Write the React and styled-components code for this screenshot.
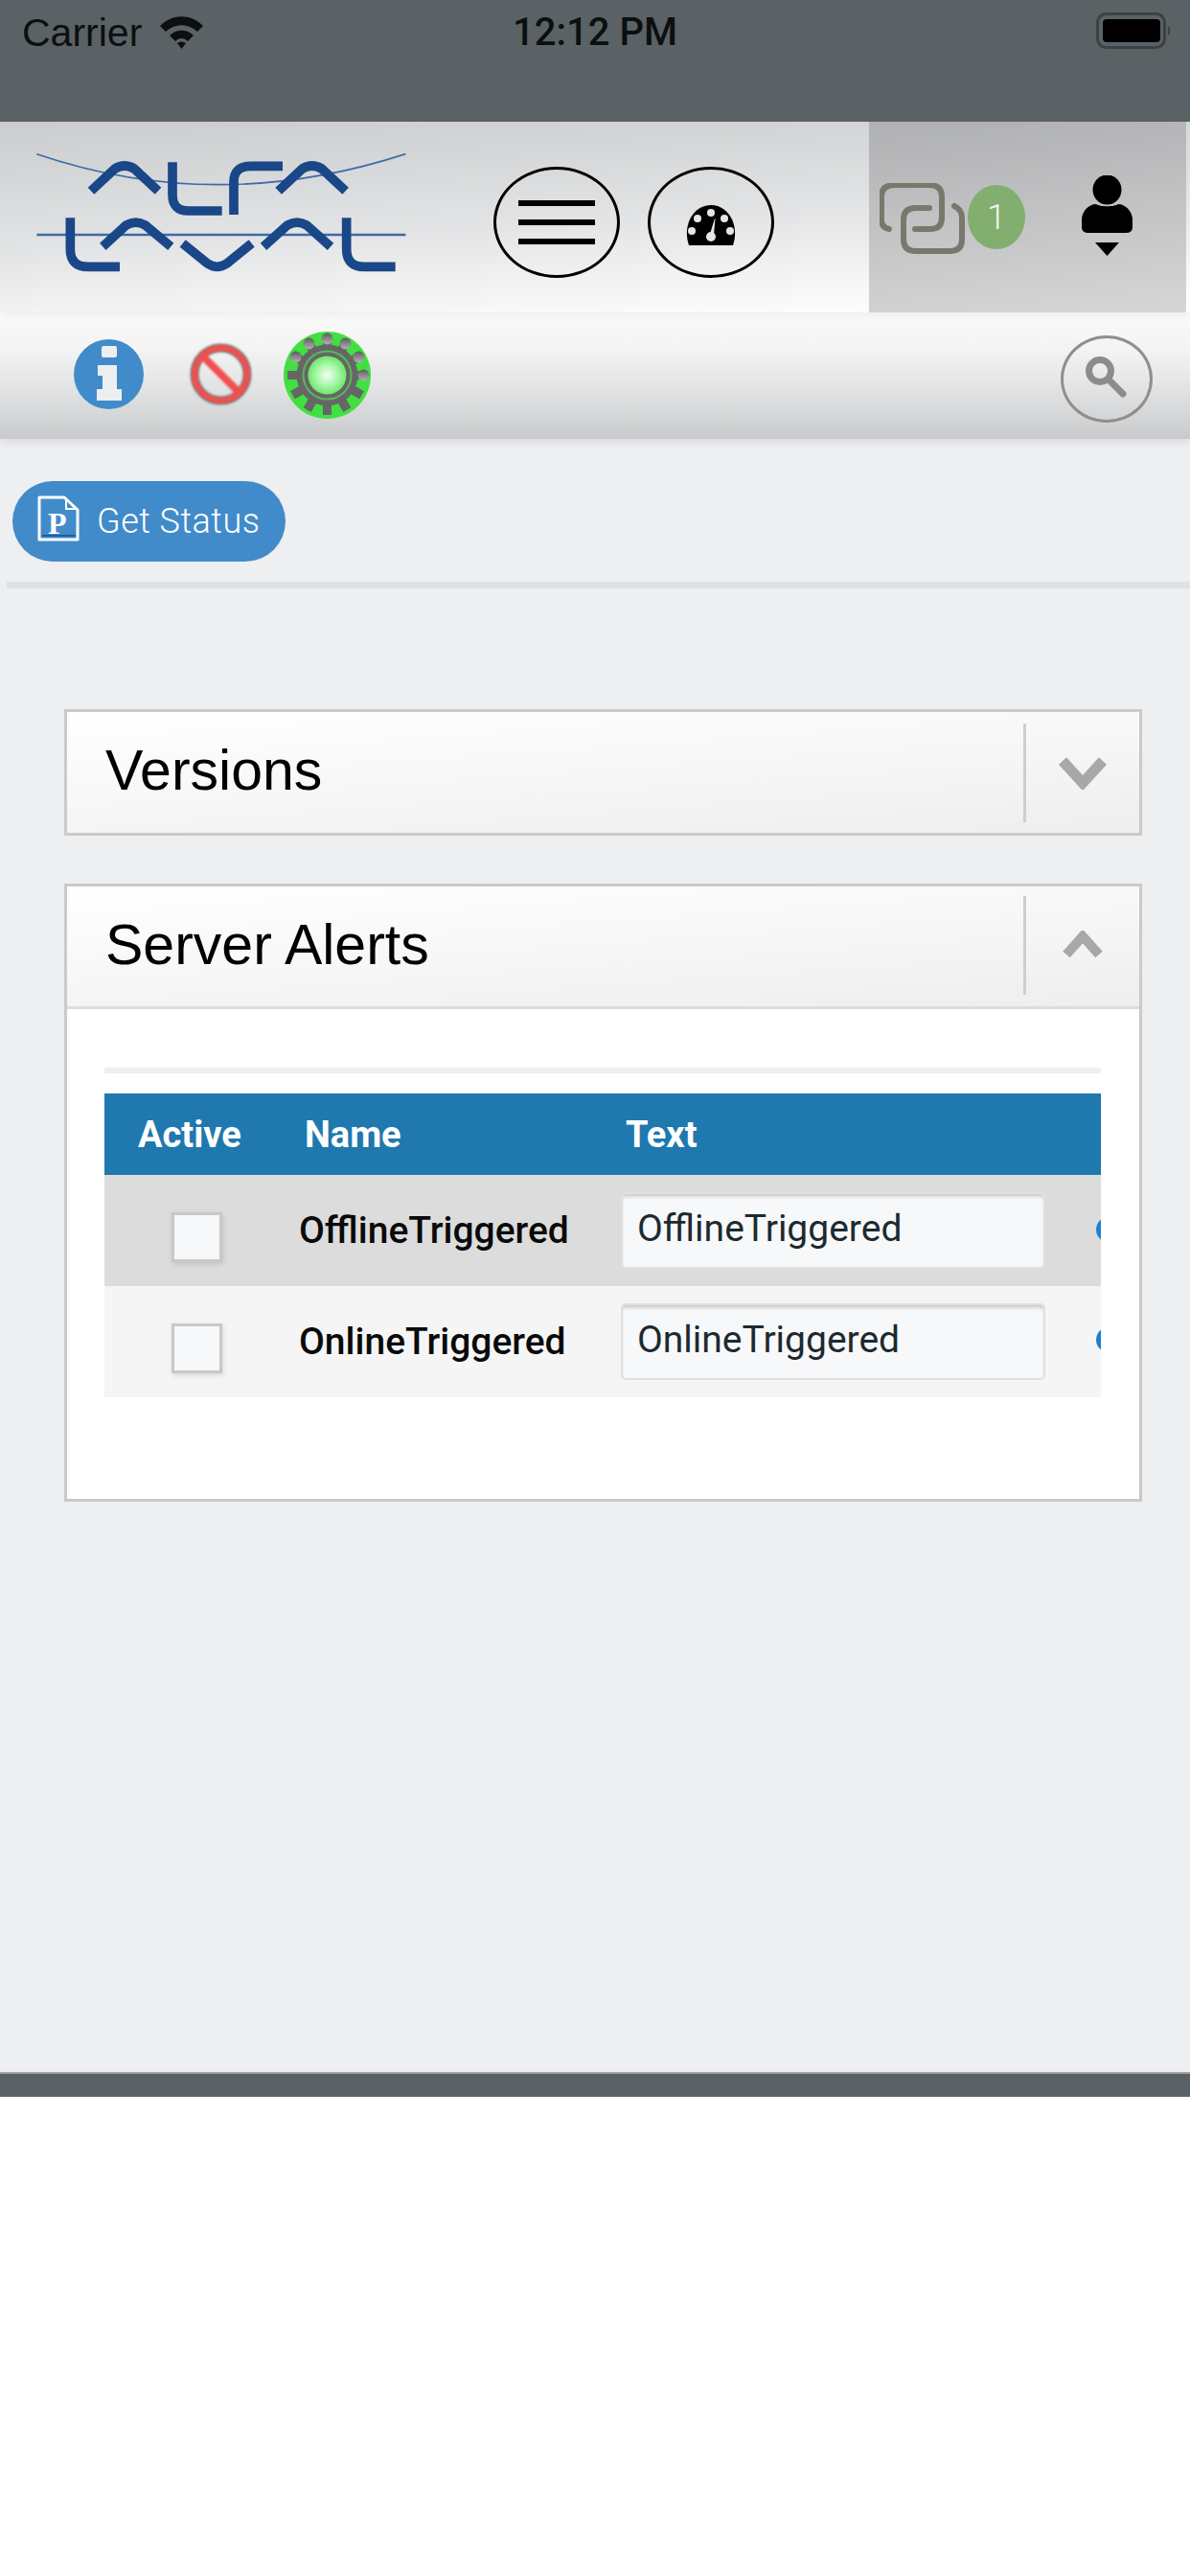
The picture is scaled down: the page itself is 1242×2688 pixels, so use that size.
import React from 'react';
import styled, { createGlobalStyle } from 'styled-components';

const Global = createGlobalStyle`
  html, body { margin: 0; padding: 0; background: #fff; }
  * { box-sizing: border-box; }
`;

const Page = styled.div`
  width: 1242px;
  height: 2688px;
  display: flex;
  flex-direction: column;
  background: #fff;
  font-family: "Liberation Sans", Arial, sans-serif;
  overflow: hidden;
`;

const StatusBar = styled.div`
  height: 127px;
  flex: none;
  background: #5b6265;
  display: flex;
  align-items: flex-start;
  padding: 14px 19px 0 23px;
  color: #0c0f10;
  position: relative;
`;

const Carrier = styled.span`
  font-size: 41px;
  line-height: 40px;
`;

const Clock = styled.span`
  position: absolute;
  left: 0;
  right: 0;
  top: 14px;
  text-align: center;
  font-family: Roboto, sans-serif;
  font-weight: 500;
  font-size: 40px;
  line-height: 40px;
`;

const Wifi = styled.svg`
  width: 49px;
  height: 36px;
  margin: 1px 0 0 17px;
`;

const Battery = styled.svg`
  width: 79px;
  height: 38px;
  margin: -1px 0 0 auto;
`;

const TopBar = styled.header`
  height: 199px;
  flex: none;
  display: flex;
  padding-right: 4px;
  background: linear-gradient(177deg, #cbccce 0%, #e2e3e4 50%, #ffffff 97%);
  position: relative;
  z-index: 2;
  box-shadow: 0 3px 10px rgba(0, 0, 0, 0.06);
`;

const Logo = styled.svg`
  width: 420px;
  height: 160px;
  margin: 13px 0 0 20px;
  flex: none;
`;

const RoundButtons = styled.div`
  display: flex;
  gap: 29px;
  margin: 47px 0 0 75px;
`;

const RoundButton = styled.div`
  width: 132px;
  height: 116px;
  border: 3px solid #000;
  border-radius: 50%;
  display: flex;
  flex-direction: column;
  align-items: center;
  justify-content: center;
  gap: 14px;
`;

const Bar = styled.span`
  width: 80px;
  height: 6px;
  background: #000;
`;

const Gauge = styled.svg`
  width: 54px;
  height: 42px;
  margin-top: 6px;
`;

const UserPanel = styled.div`
  margin-left: auto;
  width: 331px;
  background: linear-gradient(175deg, #afb0b2 0%, #d6d6d6 100%);
  display: flex;
  padding: 64px 0 0 11px;
`;

const ChatIcon = styled.svg`
  width: 90px;
  height: 74px;
  flex: none;
`;

const Badge = styled.span`
  width: 60px;
  height: 67px;
  margin: 2px 0 0 2px;
  border-radius: 50%;
  background: #82ae6f;
  color: #f2f6ef;
  font-family: Roboto, sans-serif;
  font-weight: 300;
  font-size: 36px;
  display: flex;
  align-items: center;
  justify-content: center;
  flex: none;
`;

const UserIcon = styled.svg`
  width: 55px;
  height: 85px;
  margin: -8px 0 0 58px;
  flex: none;
`;

const SubBar = styled.div`
  height: 132px;
  flex: none;
  display: flex;
  align-items: center;
  padding: 0 39px 0 77px;
  background: linear-gradient(180deg, #fbfbfb 0%, #f3f3f4 30%, #dfe0e1 65%, #c9cacc 100%);
  box-shadow: 0 3px 10px rgba(0, 0, 0, 0.1);
  position: relative;
  z-index: 1;
`;

const InfoIcon = styled.svg`
  width: 73px;
  height: 73px;
  margin-top: -4px;
  flex: none;
`;

const NoIcon = styled.svg`
  width: 65px;
  height: 65px;
  margin: -4px 33px 0 48px;
  flex: none;
  filter: blur(0.8px);
`;

const GearIcon = styled.svg`
  width: 91px;
  height: 91px;
  margin-top: -2px;
  flex: none;
`;

const SearchButton = styled.div`
  margin: 6px 0 0 auto;
  width: 96px;
  height: 91px;
  border: 3px solid #8f8f8f;
  border-radius: 50%;
  display: flex;
  align-items: center;
  justify-content: center;
`;

const Main = styled.main`
  flex: none;
  height: 1706px;
  background: #eeeff1;
  border-bottom: 2px solid #a4a6a8;
`;

const ToolRow = styled.div`
  height: 156px;
  padding: 44px 0 0 6px;
  margin-left: 7px;
  border-bottom: 7px solid #e0e1e2;
`;

const StatusButton = styled.button`
  width: 285px;
  height: 84px;
  border: 0;
  border-radius: 42px;
  background: #428bca;
  color: #fff;
  font-family: Roboto, sans-serif;
  font-weight: 300;
  font-size: 36px;
  letter-spacing: 0.5px;
  display: flex;
  align-items: center;
  padding: 0 0 0 26px;
  gap: 18px;
`;

const FileIcon = styled.svg`
  width: 44px;
  height: 48px;
  flex: none;
  margin-top: -6px;
`;

const Panels = styled.div`
  display: flex;
  flex-direction: column;
  gap: 50px;
  margin: 126px 50px 0 67px;
`;

const Panel = styled.section`
  border: 3px solid #c9caca;
  background: #fff;
`;

const PanelHead = styled.div`
  height: ${(p) => (p.$open ? '128px' : '126px')};
  display: flex;
  align-items: center;
  padding-left: 40px;
  background: linear-gradient(176deg, #ffffff 0%, #f6f6f6 55%, #eeeeee 100%);
  border-bottom: ${(p) => (p.$open ? '3px solid #dcdcdc' : '0')};
`;

const PanelTitle = styled.h2`
  margin: 0 0 4px;
  font-weight: 400;
  font-size: 59px;
  color: #000;
`;

const Toggle = styled.div`
  margin-left: auto;
  width: 121px;
  height: 103px;
  border-left: 3px solid #cecece;
  display: flex;
  align-items: center;
  justify-content: center;
  margin-top: ${(p) => (p.$open ? '-3px' : '0')};
`;

const PanelBody = styled.div`
  height: 511px;
  padding: 61px 40px 0 39px;
`;

const Rule = styled.div`
  height: 6px;
  background: #eeeeee;
  margin-bottom: 21px;
`;

const TableWrap = styled.div`
  overflow: hidden;
`;

const Row = styled.div`
  display: grid;
  grid-template-columns: 204px 335px 1fr;
  align-items: center;
  height: ${(p) => (p.$head ? '85px' : '116px')};
  background: ${(p) => p.$bg};
  position: relative;
`;

const HeadCell = styled.div`
  color: #fff;
  font-family: Roboto, sans-serif;
  font-weight: 700;
  font-size: 38px;
  margin-left: ${(p) => p.$left}px;
`;

const CheckCell = styled.div`
  display: flex;
  padding: 14px 0 0 70px;
`;

const Check = styled.span`
  width: 53px;
  height: 52px;
  border: 3px solid #c8c8c8;
  background: #f7f8fa;
  box-shadow: 1px 2px 5px rgba(0, 0, 0, 0.12);
`;

const NameCell = styled.div`
  font-family: Roboto, sans-serif;
  font-size: 39px;
  font-weight: 500;
  color: #0a0a0a;
  margin-left: -1px;
`;

const TextInput = styled.div`
  width: 443px;
  height: 80px;
  border: 2px solid #e0e0e0;
  border-radius: 5px;
  background: #f7f8fa;
  box-shadow: inset 0 4px 4px -2px rgba(0, 0, 0, 0.22);
  display: flex;
  align-items: center;
  padding: 0 0 4px 15px;
  font-family: Roboto, sans-serif;
  font-size: 39px;
  color: #1c2a30;
`;

const EditDot = styled.span`
  position: absolute;
  left: 1035px;
  top: ${(p) => p.$top}px;
  width: 34px;
  height: 30px;
  border-radius: 50%;
  background: #1d7fd0;
`;

const Footer = styled.div`
  height: 24px;
  flex: none;
  background: #5b6265;
`;

const Arch = (x) =>
  `M${x} 178 L${x + 75} 108 Q${x + 105} 90 ${x + 135} 108 L${x + 210} 178`;

const LogoMark = () => (
  <Logo viewBox="0 0 1260 480">
    <path d="M55 62 Q620 254 1210 62" fill="none" stroke="#3f6ca8" strokeWidth="5" />
    <path d="M55 315 H1210" fill="none" stroke="#3f6aa3" strokeWidth="7" />
    <g fill="none" stroke="#1a4788" strokeWidth="29">
      <path d={Arch(225)} />
      <path d="M480 88 V190 Q480 240 530 240 H635" />
      <path d="M672 252 V150 Q672 100 725 100 H825" />
      <path d={Arch(812)} />
      <path d="M160 262 V360 Q160 415 215 415 H315" />
      <path d="M262 352 L335 285 Q365 268 395 285 L475 352" />
      <path d="M512 342 L590 405 Q620 425 650 405 L728 342" />
      <path d="M765 352 L840 285 Q870 268 900 285 L975 352" />
      <path d="M1025 262 V360 Q1025 415 1080 415 H1178" />
    </g>
  </Logo>
);

const Chevron = ({ up }) =>
  up ? (
    <svg width="44" height="30" viewBox="0 0 44 30">
      <path d="M5 25 L22 6 L39 25" fill="none" stroke="#a8a8a8" strokeWidth="10" strokeLinejoin="miter" />
    </svg>
  ) : (
    <svg width="52" height="36" viewBox="0 0 52 36">
      <path d="M5 6 L26 29 L47 6" fill="none" stroke="#a8a8a8" strokeWidth="11" strokeLinejoin="miter" />
    </svg>
  );

const teeth = [0, 1, 2, 3, 4, 5, 6, 7, 8, 9, 10, 11];

const rows = [
  { name: 'OfflineTriggered', bg: '#dcdcdc', dot: 42 },
  { name: 'OnlineTriggered', bg: '#f5f5f5', dot: 41 },
];

export default function App() {
  return (
    <Page>
      <Global />
      <StatusBar>
        <Carrier>Carrier</Carrier>
        <Wifi viewBox="0 0 49 36">
          <path d="M2 12 C15 -1 34 -1 47 12 L41 18 C31 9 18 9 8 18 Z" fill="#0c0f10" />
          <path d="M12 22 C19 15 30 15 37 22 L31 28 C27 24 22 24 18 28 Z" fill="#0c0f10" />
          <path d="M20 30 C23 28 26 28 29 30 L24.5 36 Z" fill="#0c0f10" />
        </Wifi>
        <Clock>12:12 PM</Clock>
        <Battery viewBox="0 0 79 38">
          <rect x="1.5" y="1.5" width="70" height="35" rx="9" fill="none" stroke="#3c4143" strokeWidth="3" />
          <rect x="7" y="7" width="60" height="24" rx="4" fill="#000" />
          <path d="M75 14 C78 15 78 23 75 24 Z" fill="#3c4143" />
        </Battery>
      </StatusBar>

      <TopBar>
        <LogoMark />
        <RoundButtons>
          <RoundButton>
            <Bar />
            <Bar />
            <Bar />
          </RoundButton>
          <RoundButton>
            <Gauge viewBox="0 0 54 42">
              <path d="M4 42 C-3 22 8 0 27 0 C46 0 57 22 50 42 Z" fill="#000" />
              <g fill="#e4e5e6">
                <circle cx="27" cy="8" r="4" />
                <circle cx="13" cy="14" r="4" />
                <circle cx="41" cy="14" r="4" />
                <circle cx="7" cy="27" r="4" />
                <circle cx="47" cy="27" r="4" />
                <circle cx="27" cy="33" r="5" />
                <path d="M26 30 L31 14 L31.5 14 L30 31 Z" />
              </g>
            </Gauge>
          </RoundButton>
        </RoundButtons>
        <UserPanel>
          <ChatIcon viewBox="0 0 90 74">
            <g fill="none" stroke="#78786d" strokeWidth="6" strokeLinecap="round">
              <path d="M10 48 Q2 46 2 39 V14 Q2 2 16 2 H52 Q65 2 65 14 V36 Q65 48 53 48 H37" />
              <path d="M52 26 H38 Q25 26 25 38 V59 Q25 71 38 71 H73 Q86 71 86 59 V36 Q86 28 78 24" />
            </g>
          </ChatIcon>
          <Badge>1</Badge>
          <UserIcon viewBox="0 0 55 85">
            <ellipse cx="27.5" cy="15" rx="15" ry="15.5" fill="#000" />
            <path d="M16 30 C20 33 35 33 39 30 C47 30 54 38 54 46 V54 Q54 60 47 60 H8 Q1 60 1 54 V46 C1 38 8 30 16 30 Z" fill="#000" />
            <path d="M15 70 H40 L27.5 84 Z" fill="#000" />
          </UserIcon>
        </UserPanel>
      </TopBar>

      <SubBar>
        <InfoIcon viewBox="0 0 73 73">
          <circle cx="36.5" cy="36.5" r="36.5" fill="#428bca" />
          <path d="M31 7 H43 Q45 7 45 9 V17 Q45 19 43 19 H31 Q29 19 29 17 V9 Q29 7 31 7 Z M25 27 H45 V52 H50 V64 H24 V52 H30 V38 H25 Z" fill="#eceef0" />
        </InfoIcon>
        <NoIcon viewBox="0 0 65 65">
          <circle cx="32.5" cy="32.5" r="27.5" fill="none" stroke="#767676" strokeWidth="9" />
          <circle cx="32.5" cy="32.5" r="27.5" fill="none" stroke="#f2504f" strokeWidth="6" />
          <path d="M14 14 L51 51" stroke="#f2504f" strokeWidth="8" />
        </NoIcon>
        <GearIcon viewBox="0 0 91 91">
          <defs>
            <radialGradient id="led">
              <stop offset="0%" stopColor="#f2fff2" />
              <stop offset="60%" stopColor="#a4f5a4" />
              <stop offset="100%" stopColor="#6ee86e" />
            </radialGradient>
            <linearGradient id="hole" x1="0" y1="0" x2="0" y2="1">
              <stop offset="0%" stopColor="#5c5c5c" />
              <stop offset="100%" stopColor="#b4b4b4" />
            </linearGradient>
          </defs>
          <circle cx="45.5" cy="45.5" r="45.5" fill="#40e040" />
          {teeth.map((t) => (
            <rect key={t} x="41" y="4" width="9" height="83" fill="#666" transform={`rotate(${t * 30} 45.5 45.5)`} />
          ))}
          <circle cx="45.5" cy="45.5" r="32" fill="#666" />
          {teeth.slice(0, 6).map((t) => {
            const angle = ((t * 30 - 60) * Math.PI) / 180;
            return (
              <circle
                key={t}
                cx={45.5 + 38 * Math.sin(angle)}
                cy={45.5 - 38 * Math.cos(angle)}
                r="6"
                fill="url(#hole)"
              />
            );
          })}
          <circle cx="45.5" cy="45.5" r="25" fill="none" stroke="#58b858" strokeWidth="2" />
          <circle cx="45.5" cy="45.5" r="20" fill="url(#led)" />
        </GearIcon>
        <SearchButton>
          <svg width="46" height="46" viewBox="0 0 46 46">
            <circle cx="16" cy="15" r="11.5" fill="none" stroke="#8c8c8c" strokeWidth="7" />
            <path d="M25 24 L40 39" stroke="#8c8c8c" strokeWidth="7" strokeLinecap="round" />
          </svg>
        </SearchButton>
      </SubBar>

      <Main>
        <ToolRow>
          <StatusButton>
            <FileIcon viewBox="0 0 44 48">
              <path d="M2 2 H28 L42 15 V46 H2 Z" fill="none" stroke="#fff" strokeWidth="3" strokeLinejoin="round" />
              <path d="M30 4 V14 H40 Z" fill="#428bca" stroke="#fff" strokeWidth="2" />
              <path d="M5 42 H40" stroke="#1f5f9c" strokeWidth="2" />
              <text x="21" y="40" textAnchor="middle" fontFamily="Liberation Serif, serif" fontWeight="700" fontSize="32" fill="#fff">P</text>
            </FileIcon>
            Get Status
          </StatusButton>
        </ToolRow>

        <Panels>
          <Panel>
            <PanelHead>
              <PanelTitle>Versions</PanelTitle>
              <Toggle>
                <Chevron />
              </Toggle>
            </PanelHead>
          </Panel>
          <Panel>
            <PanelHead $open>
              <PanelTitle>Server Alerts</PanelTitle>
              <Toggle $open>
                <Chevron up />
              </Toggle>
            </PanelHead>
            <PanelBody>
              <Rule />
              <TableWrap>
                <Row $head $bg="#1f78ae">
                  <HeadCell $left={35}>Active</HeadCell>
                  <HeadCell $left={5}>Name</HeadCell>
                  <HeadCell $left={5}>Text</HeadCell>
                </Row>
                {rows.map((r) => (
                  <Row key={r.name} $bg={r.bg}>
                    <CheckCell>
                      <Check />
                    </CheckCell>
                    <NameCell>{r.name}</NameCell>
                    <TextInput>{r.name}</TextInput>
                    <EditDot $top={r.dot} />
                  </Row>
                ))}
              </TableWrap>
            </PanelBody>
          </Panel>
        </Panels>
      </Main>
      <Footer />
    </Page>
  );
}
